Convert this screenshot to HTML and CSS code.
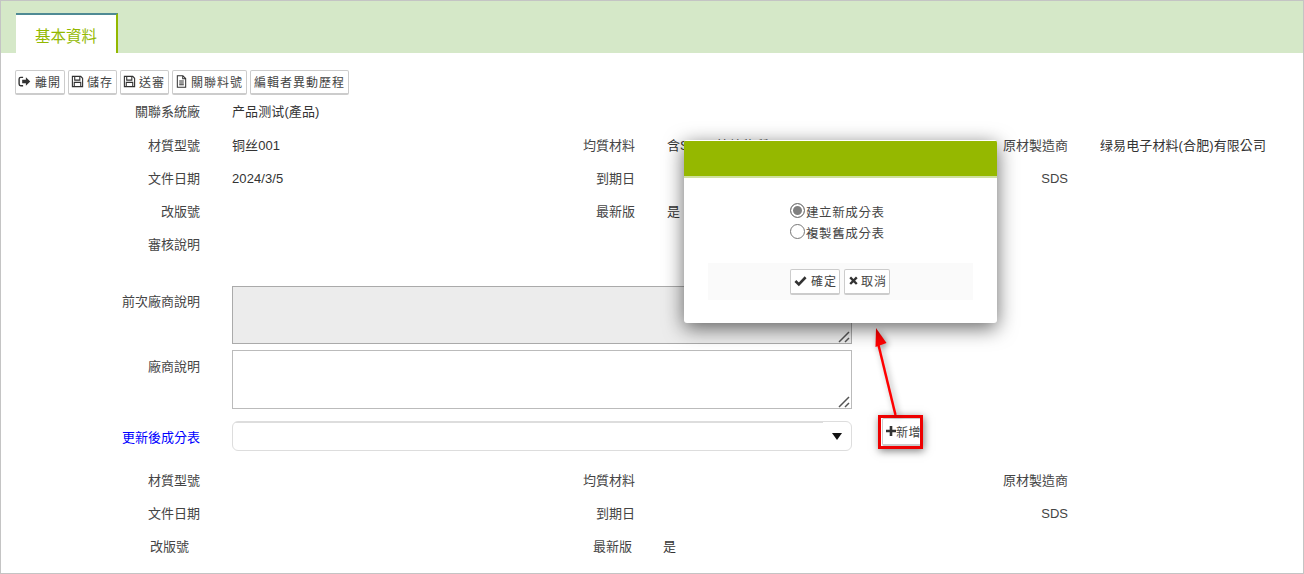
FILE: index.html
```html
<!DOCTYPE html>
<html lang="en">
<head>
  <meta charset="UTF-8">
  <title>基本資料</title>
  <link rel="stylesheet" href="styles.css">
</head>
<body>
  <div class="page">
    <div class="tabbar">
      <div class="tab">基本資料</div>
    </div>

    <div class="toolbar">
      <button class="btn btn-exit" type="button">
        <svg class="icon" viewBox="0 0 14 14"><path d="M5.5 2.5H3A1.8 1.8 0 0 0 1.2 4.300v5.400A1.800 1.800 0 0 0 3 11.500h2.500" fill="none" stroke="#333" stroke-width="1.500"/><path d="M4.500 5.200h4V2.500L13.200 7 8.500 11.500V8.800h-4z" fill="#333"/></svg>
        離開
      </button>
      <button class="btn" type="button">
        <svg class="icon" viewBox="0 0 14 14"><path d="M1.500 1.500h9l2 2v9h-11z M4 2v3.500h5.500V2 M3.500 12.500V8h7v4.500" fill="none" stroke="#333" stroke-width="1.200"/></svg>
        儲存
      </button>
      <button class="btn" type="button">
        <svg class="icon" viewBox="0 0 14 14"><path d="M1.500 1.500h9l2 2v9h-11z M4 2v3.500h5.500V2 M3.500 12.500V8h7v4.500" fill="none" stroke="#333" stroke-width="1.200"/></svg>
        送審
      </button>
      <button class="btn" type="button">
        <svg class="icon" viewBox="0 0 14 14"><path d="M2.500 .8h6l3 3v9.400h-9z M8.300 1v3h3 M4.500 6.500h5 M4.500 8.500h5 M4.500 10.500h5" fill="none" stroke="#333" stroke-width="1.100"/></svg>
        關聯料號
      </button>
      <button class="btn btn-text" type="button">編輯者異動歷程</button>
    </div>

    <div class="form-row first-row">
      <span class="label">關聯系統廠</span>
      <span class="value">产品测试(產品)</span>
    </div>
    <div class="form-row">
      <span class="label">材質型號</span>
      <span class="value">铜丝001</span>
      <span class="label">均質材料</span>
      <span class="value">含SVHC管控物質</span>
      <span class="label">原材製造商</span>
      <span class="value">绿易电子材料(合肥)有限公司</span>
    </div>
    <div class="form-row">
      <span class="label">文件日期</span>
      <span class="value">2024/3/5</span>
      <span class="label">到期日</span>
      <span class="value"></span>
      <span class="label">SDS</span>
      <span class="value"></span>
    </div>
    <div class="form-row">
      <span class="label">改版號</span>
      <span class="value"></span>
      <span class="label">最新版</span>
      <span class="value">是</span>
    </div>
    <div class="form-row">
      <span class="label">審核說明</span>
    </div>

    <div class="area-row prev-note">
      <span class="label">前次廠商說明</span>
      <div class="note-wrap">
        <textarea class="note note-readonly" readonly></textarea>
        <svg class="grip" width="12" height="12" viewBox="0 0 12 12"><path d="M1 11 11 1 M7 11 11 7" stroke="#555" stroke-width="1.500" fill="none"/></svg>
      </div>
    </div>
    <div class="area-row vendor-note">
      <span class="label">廠商說明</span>
      <div class="note-wrap">
        <textarea class="note"></textarea>
        <svg class="grip" width="12" height="12" viewBox="0 0 12 12"><path d="M1 11 11 1 M7 11 11 7" stroke="#555" stroke-width="1.500" fill="none"/></svg>
      </div>
    </div>

    <div class="select-row">
      <span class="label label-link">更新後成分表</span>
      <div class="combo"><span class="combo-arrow"></span></div>
      <div class="highlight">
        <button class="btn btn-add" type="button">
          <svg class="icon-small" viewBox="0 0 10 10"><path d="M3.700 0h2.600v3.700H10v2.600H6.300V10H3.700V6.300H0V3.700h3.700z" fill="#333"/></svg>新增
        </button>
      </div>
    </div>

    <div class="form-row second-block">
      <span class="label">材質型號</span>
      <span class="value"></span>
      <span class="label">均質材料</span>
      <span class="value"></span>
      <span class="label">原材製造商</span>
      <span class="value"></span>
    </div>
    <div class="form-row">
      <span class="label">文件日期</span>
      <span class="value"></span>
      <span class="label">到期日</span>
      <span class="value"></span>
      <span class="label">SDS</span>
      <span class="value"></span>
    </div>
    <div class="form-row last-row">
      <span class="label">改版號</span>
      <span class="value"></span>
      <span class="label">最新版</span>
      <span class="value">是</span>
    </div>

    <!-- annotation arrow over the page -->
    <svg class="arrow" width="40" height="100" viewBox="0 0 40 100">
      <path d="M23.500 95 L6.500 25" stroke="#f00" stroke-width="2.500" fill="none"/>
      <path d="M4 8 L3.500 27 L14.500 23 z" fill="#f00"/>
    </svg>

    <div class="dialog">
      <div class="dialog-head"></div>
      <div class="dialog-body">
        <label class="choice"><input type="radio" name="mode" checked>建立新成分表</label>
        <label class="choice"><input type="radio" name="mode">複製舊成分表</label>
      </div>
      <div class="dialog-foot">
        <button class="btn btn-ok" type="button">
          <svg class="icon" viewBox="0 0 14 14"><path d="M1.500 7.500 5.200 11.200 12.500 3.500" fill="none" stroke="#333" stroke-width="2.800"/></svg>
          確定
        </button>
        <button class="btn btn-cancel" type="button">
          <svg class="icon" viewBox="0 0 14 14"><path d="M2.800 3 11.200 11.500 M11.200 3 2.800 11.500" fill="none" stroke="#333" stroke-width="3"/></svg>
          取消
        </button>
      </div>
    </div>
  </div>
</body>
</html>
```

FILE: styles.css
```css
html, body {
  margin: 0;
  padding: 0;
}

body {
  font-family: "Liberation Sans", "Noto Sans CJK TC", sans-serif;
  font-size: 13px;
  color: #333;
  background-color: #fff;
}

.page {
  position: relative;
  box-sizing: border-box;
  width: 1304px;
  height: 574px;
  border: 1px solid #c4c4c4;
  overflow: hidden;
}

.tabbar {
  display: flex;
  height: 52px;
  padding-left: 15px;
  background-color: #d5e8c8;
}

.tab {
  box-sizing: border-box;
  width: 102px;
  height: 40px;
  margin-top: 12px;
  padding-top: 9px;
  background-color: #fff;
  border-top: 2px solid #4f8a94;
  border-right: 2px solid #93b800;
  color: #93b800;
  font-size: 15.500px;
  text-align: center;
}

.toolbar {
  display: flex;
  gap: 3px;
  height: 26px;
  margin-top: 17px;
  padding-left: 14px;
}

.btn {
  display: inline-flex;
  align-items: center;
  gap: 3px;
  height: 25px;
  padding: 0 3px 2px 2px;
  background-color: #fff;
  border: 1px solid #ccc;
  border-bottom-width: 2px;
  border-radius: 2px;
  color: #444;
  font-family: inherit;
  font-size: 12px;
  letter-spacing: 1px;
  white-space: nowrap;
}

.btn-exit {
  gap: 4px;
}

.btn-text {
  padding: 0 3px 2px;
}

.icon {
  width: 13px;
  height: 13px;
  flex: none;
}

.icon-small {
  width: 10px;
  height: 10px;
  flex: none;
}

.form-row {
  display: grid;
  grid-template-columns: 199px 367px 68px 366px 67px 1fr;
  height: 33px;
  line-height: 33px;
}

.first-row {
  line-height: 31px;
}

.label {
  color: #444;
  text-align: right;
  white-space: nowrap;
}

.value {
  padding-left: 32px;
  letter-spacing: .1px;
  white-space: nowrap;
}

.area-row {
  display: flex;
  height: 59px;
  margin-bottom: 6px;
}

.area-row .label {
  width: 199px;
  padding-top: 6px;
  line-height: 20px;
}

.prev-note {
  margin-top: 25px;
  height: 58px;
}

.vendor-note .label {
  padding-top: 7px;
}

.note-wrap {
  position: relative;
  width: 620px;
  height: 100%;
  margin-left: 32px;
}

.note {
  display: block;
  box-sizing: border-box;
  width: 100%;
  height: 100%;
  margin: 0;
  background-color: #fff;
  border: 1px solid #bbb;
  border-radius: 0;
  resize: none;
}

.note-readonly {
  background-color: #ececec;
  border-color: #aaa;
}

.grip {
  position: absolute;
  right: 2px;
  bottom: 1px;
}

.select-row {
  display: flex;
  align-items: center;
  height: 30px;
  margin-top: 12px;
}

.select-row .label {
  width: 199px;
}

.label-link {
  color: #00f;
}

.combo {
  box-sizing: border-box;
  display: flex;
  justify-content: flex-end;
  align-items: center;
  width: 620px;
  height: 30px;
  margin-left: 32px;
  padding-right: 9px;
  background: linear-gradient(#ddd, #ddd) no-repeat left top / 590px 1px #fff;
  border: 1px solid #ddd;
  border-radius: 6px;
}

.combo-arrow {
  width: 0;
  height: 0;
  border-left: 5px solid transparent;
  border-right: 5px solid transparent;
  border-top: 7px solid #111;
}

.highlight {
  box-sizing: border-box;
  align-self: flex-start;
  width: 45px;
  height: 34px;
  margin: -6px 0 0 26px;
  padding-left: 1px;
  border: 3px solid #ee0000;
  box-shadow: 1px 2px 8px rgba(0, 0, 0, .5);
  background-color: #fff;
  overflow: hidden;
}

.btn-add {
  height: 28px;
  width: 50px;
  padding: 0 0 1px 3px;
  gap: 0;
  letter-spacing: .5px;
}

.second-block {
  margin-top: 13px;
}

.last-row .label:first-child {
  padding-right: 11px;
}

.last-row .label:nth-child(3) {
  padding-right: 3px;
}

.last-row .value:nth-child(4) {
  padding-left: 28px;
}

.arrow {
  position: absolute;
  left: 871px;
  top: 319px;
  filter: drop-shadow(2px 2px 3px rgba(0, 0, 0, .4));
}

.dialog {
  position: absolute;
  left: 683px;
  top: 139px;
  box-sizing: border-box;
  width: 313px;
  height: 183px;
  background-color: #fff;
  border-radius: 3px;
  box-shadow: 0 5px 20px rgba(0, 0, 0, .6);
  overflow: hidden;
}

.dialog-head {
  height: 35px;
  margin-top: 1px;
  background-color: #95b800;
  border-bottom: 2px solid #cfe0a0;
}

.dialog-body {
  display: flex;
  flex-direction: column;
  align-items: flex-start;
  height: 85px;
  padding: 22px 0 0 106px;
  box-sizing: border-box;
  letter-spacing: .6px;
}

.choice {
  display: flex;
  align-items: flex-start;
  height: 21px;
  line-height: 27px;
  font-size: 12.500px;
  color: #444;
}

.choice input {
  appearance: none;
  box-sizing: border-box;
  width: 15px;
  height: 15px;
  margin: 3px 1px 0 0;
  background-color: #fff;
  border: 1px solid #777;
  border-radius: 50%;
}

.choice input:checked {
  background-color: #808080;
  box-shadow: inset 0 0 0 2px #fff;
}

.dialog-foot {
  display: flex;
  justify-content: flex-start;
  gap: 4px;
  height: 37px;
  margin: 0 24px;
  padding: 6px 0 0 82px;
  box-sizing: border-box;
  background-color: #fafafa;
}

.dialog-foot .btn {
  height: 26px;
  padding: 0 2px 2px 3px;
}

.btn-ok {
  gap: 4px;
}

.btn-cancel {
  gap: 2px;
}

.btn-cancel .icon {
  width: 11px;
  height: 11px;
}
```
